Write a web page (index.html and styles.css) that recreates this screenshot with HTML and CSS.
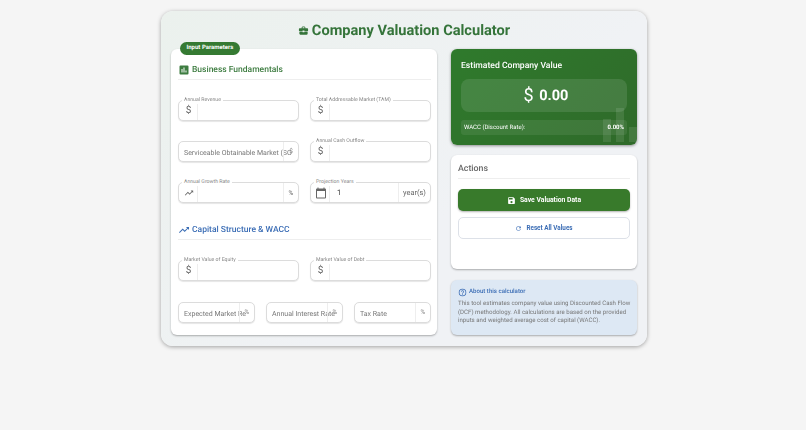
FILE: index.html
```html
<!DOCTYPE html>
<html lang="en">
<head>
  <meta charset="UTF-8" />
  <meta name="viewport" content="width=device-width, initial-scale=1.0"/>
  <title>Company Valuation Calculator</title>
  <link rel="stylesheet" href="styles.css">
</head>
<body>
  <div class="shell">
    <h1 class="title">
      <svg class="title-icon" viewBox="0 0 24 24"><path d="M10 16v-1H3.01L3 19c0 1.11.89 2 2 2h14c1.11 0 2-.89 2-2v-4h-7v1h-4zm10-9h-4.01V5l-2-2h-4l-2 2v2H4c-1.1 0-2 .9-2 2v3c0 1.11.89 2 2 2h6v-2h4v2h6c1.1 0 2-.9 2-2V9c0-1.1-.9-2-2-2zm-6 0h-4V5h4v2z"/></svg>
      Company Valuation Calculator
    </h1>
    <div class="columns">
      <div class="card inputs">
        <span class="badge">Input Parameters</span>

        <h2 class="section green">
          <svg viewBox="0 0 24 24"><path d="M19 3H5a2 2 0 0 0-2 2v14a2 2 0 0 0 2 2h14a2 2 0 0 0 2-2V5a2 2 0 0 0-2-2zM9 17H7v-7h2zm4 0h-2V7h2zm4 0h-2v-4h2z"/></svg>
          Business Fundamentals
        </h2>
        <div class="grid two">
          <div class="field"><label>Annual Revenue</label><span class="adorn start">$</span><span class="value"></span></div>
          <div class="field"><label>Total Addressable Market (TAM)</label><span class="adorn start">$</span><span class="value"></span></div>
          <div class="field empty"><span class="placeholder">Serviceable Obtainable Market (SO</span><span class="adorn end over">$</span></div>
          <div class="field"><label>Annual Cash Outflow</label><span class="adorn start">$</span><span class="value"></span></div>
          <div class="field"><label>Annual Growth Rate</label>
            <span class="adorn start"><svg class="adorn-icon" viewBox="0 0 24 24"><path d="M16 6l2.3 2.3-4.9 4.9-4-4L2 16.6 3.4 18l6-6 4 4 6.3-6.3L22 12V6z"/></svg></span>
            <span class="value"></span><span class="adorn end">%</span></div>
          <div class="field"><label>Projection Years</label>
            <span class="adorn start"><svg class="adorn-icon cal" viewBox="0 0 24 24"><path d="M20 3h-1V1h-2v2H7V1H5v2H4a2 2 0 0 0-2 2v16a2 2 0 0 0 2 2h16a2 2 0 0 0 2-2V5a2 2 0 0 0-2-2zm0 18H4V8h16z"/></svg></span>
            <span class="value">1</span><span class="adorn end years">year(s)</span></div>
        </div>

        <h2 class="section blue second">
          <svg viewBox="0 0 24 24"><path d="M16 6l2.3 2.3-4.9 4.9-4-4L2 16.6 3.4 18l6-6 4 4 6.3-6.3L22 12V6z"/></svg>
          Capital Structure &amp; WACC
        </h2>
        <div class="grid two">
          <div class="field"><label>Market Value of Equity</label><span class="adorn start">$</span><span class="value"></span></div>
          <div class="field"><label>Market Value of Debt</label><span class="adorn start">$</span><span class="value"></span></div>
        </div>
        <div class="grid three">
          <div class="field empty"><span class="placeholder">Expected Market Re</span><span class="adorn end over">%</span></div>
          <div class="field empty"><span class="placeholder">Annual Interest Rate</span><span class="adorn end over">%</span></div>
          <div class="field empty"><span class="placeholder">Tax Rate</span><span class="adorn end over">%</span></div>
        </div>
      </div>

      <div class="side">
        <div class="result">
          <h3>Estimated Company Value</h3>
          <div class="amount"><span class="currency">$</span> 0.00</div>
          <div class="wacc"><span>WACC (Discount Rate):</span><b>0.00%</b></div>
          <div class="bars"><i class="b1"></i><i class="b2"></i><i class="b3"></i></div>
        </div>

        <div class="card actions">
          <h3>Actions</h3>
          <button class="btn primary">
            <svg viewBox="0 0 24 24"><path d="M17 3H5a2 2 0 0 0-2 2v14a2 2 0 0 0 2 2h14a2 2 0 0 0 2-2V7zm-5 16a3 3 0 1 1 0-6 3 3 0 0 1 0 6zm3-10H5V5h10z"/></svg>
            Save Valuation Data
          </button>
          <button class="btn outline">
            <svg viewBox="0 0 24 24"><path d="M17.65 6.35A7.96 7.96 0 0 0 12 4a8 8 0 1 0 7.73 10h-2.08A6 6 0 1 1 12 6c1.66 0 3.14.69 4.22 1.78L13 11h7V4z"/></svg>
            Reset All Values
          </button>
        </div>

        <div class="about">
          <div class="about-head">
            <svg viewBox="0 0 24 24"><path d="M11 18h2v-2h-2zm1-16a10 10 0 1 0 0 20 10 10 0 0 0 0-20zm0 18a8 8 0 1 1 0-16 8 8 0 0 1 0 16zm0-14a4 4 0 0 0-4 4h2a2 2 0 1 1 4 0c0 2-3 1.75-3 5h2c0-2.25 3-2.5 3-5a4 4 0 0 0-4-4z"/></svg>
            About this calculator
          </div>
          <p>This tool estimates company value using Discounted Cash Flow (DCF) methodology. All calculations are based on the provided inputs and weighted average cost of capital (WACC).</p>
        </div>
      </div>
    </div>
  </div>
</body>
</html>
```

FILE: styles.css
```css
* {
  box-sizing: border-box;
}
body {
  margin: 0;
  height: 430px;
  overflow: hidden;
  background: #f5f5f5;
  font-family: Roboto, "Liberation Sans", sans-serif;
  text-rendering: geometricPrecision;
  color: #333;
  padding: 11px 159px 0 161px;
}
.shell {
  height: 335px;
  padding: 0 10px;
  border-radius: 12px;
  background: linear-gradient(135deg, #ebf1ed, #f0f2f5 60%);
  box-shadow: 0 1px 4px rgba(0, 0, 0, 0.35);
  filter: blur(0.3px);
}
.title {
  margin: 0;
  height: 38px;
  display: flex;
  align-items: center;
  justify-content: center;
  gap: 3px;
  font-size: 14.6px;
  font-weight: 700;
  color: #35743a;
}
.title-icon {
  width: 11px;
  height: 11px;
  fill: #35743a;
}
.columns {
  display: flex;
  gap: 14px;
}
.card {
  background: #fff;
  border-radius: 6px;
  box-shadow: 0 1px 2px rgba(0, 0, 0, 0.3);
}
.inputs {
  position: relative;
  width: 266px;
  height: 286px;
  padding: 14px 6px 0 7px;
}
.badge {
  position: absolute;
  top: -7px;
  left: 8.5px;
  height: 12.5px;
  line-height: 12.5px;
  padding: 0 7px;
  border-radius: 7px;
  background: #357a32;
  color: #fff;
  font-size: 6px;
  font-weight: 700;
}
.section {
  margin: 0 0 20px;
  height: 17px;
  padding: 0 0 2px;
  display: flex;
  align-items: center;
  gap: 2px;
  font-size: 8.5px;
  font-weight: 500;
  border-bottom: 1px solid #eee;
}
.section svg {
  width: 12px;
  height: 12px;
}
.section.green {
  color: #3d7c40;
}
.section.green svg {
  fill: #3d7c40;
}
.section.blue {
  color: #3b6db5;
}
.section.blue svg {
  fill: #3b6db5;
}
.section.second {
  margin-top: 20px;
}
.grid {
  display: grid;
  gap: 20px 11px;
}
.grid.two {
  grid-template-columns: 1fr 1fr;
}
.grid.three {
  grid-template-columns: 1fr 1fr 1fr;
  margin-top: 21px;
}
.field {
  position: relative;
  height: 21px;
  display: flex;
  align-items: center;
  border: 1px solid #dcdcdc;
  border-radius: 5px;
  box-shadow: 0 1px 1px rgba(0, 0, 0, 0.1);
  background: #fff;
  min-width: 0;
}
.field label {
  position: absolute;
  top: -4px;
  left: 3px;
  padding: 0 2px;
  background: #fff;
  font-size: 5.2px;
  line-height: 7px;
  color: #888;
  white-space: nowrap;
}
.adorn {
  height: 100%;
  display: flex;
  align-items: center;
  justify-content: center;
  color: #666;
  font-size: 10px;
  flex: none;
}
.adorn.start {
  width: 19px;
  border-right: 1px solid #eee;
  padding-left: 1px;
}
.adorn.end {
  width: 15px;
  font-size: 6.5px;
  border-left: 1px solid #eee;
  margin-left: auto;
}
.adorn.over {
  position: absolute;
  right: 0;
  top: 0;
  color: #888;
  padding-bottom: 2px;
}
.adorn.years {
  width: 32px;
  font-size: 7.4px;
}
.adorn-icon {
  width: 10px;
  height: 10px;
  fill: #666;
}
.adorn-icon.cal {
  width: 12px;
  height: 12px;
}
.value {
  padding-left: 7px;
  font-size: 7.7px;
  color: #444;
}
.placeholder {
  padding-left: 5px;
  padding-top: 3px;
  font-size: 7px;
  color: #777;
  white-space: nowrap;
}
.side {
  width: 186px;
  display: flex;
  flex-direction: column;
  gap: 10px;
}
.result {
  position: relative;
  height: 96px;
  padding: 11px 10px 0;
  border-radius: 6px;
  overflow: hidden;
  background: linear-gradient(135deg, #2f7a2c, #2f6a2a);
  color: #fff;
  box-shadow: 0 1px 3px rgba(0, 0, 0, 0.4);
}
.result h3 {
  margin: 0;
  font-size: 8.6px;
  font-weight: 500;
  line-height: 13px;
}
.amount {
  margin-top: 6px;
  height: 33px;
  padding-left: 4px;
  line-height: 33px;
  border-radius: 8px;
  background: rgba(255, 255, 255, 0.11);
  text-align: center;
  font-size: 14.5px;
  font-weight: 700;
}
.currency {
  font-size: 18px;
  font-weight: 400;
  vertical-align: -1px;
  margin-right: 2px;
}
.wacc {
  margin-top: 8px;
  height: 15px;
  padding: 0 3px;
  border-radius: 3px;
  background: rgba(255, 255, 255, 0.08);
  display: flex;
  align-items: center;
  justify-content: space-between;
  font-size: 6px;
}
.bars {
  position: absolute;
  right: 0;
  bottom: 3px;
  display: flex;
  align-items: flex-end;
  gap: 4.5px;
}
.bars i {
  display: block;
  width: 8.5px;
  background: rgba(255, 255, 255, 0.1);
}
.bars .b1 {
  height: 23px;
}
.bars .b2 {
  height: 34px;
}
.bars .b3 {
  height: 15px;
}
.actions {
  height: 114px;
  padding: 7px 7px 0;
}
.actions h3 {
  margin: 0 0 10px;
  height: 17px;
  font-size: 8.8px;
  line-height: 14px;
  font-weight: 500;
  color: #666;
  border-bottom: 1px solid #eee;
}
.btn {
  width: 100%;
  height: 22px;
  display: flex;
  align-items: center;
  justify-content: center;
  gap: 4px;
  border-radius: 5px;
  font-family: inherit;
  font-size: 6.8px;
  font-weight: 700;
}
.btn svg {
  width: 9px;
  height: 9px;
}
.btn.primary {
  border: none;
  background: #387a2b;
  color: #fff;
  box-shadow: 0 1px 2px rgba(0, 0, 0, 0.3);
}
.btn.primary svg {
  fill: #fff;
}
.btn.outline {
  margin-top: 6px;
  padding-bottom: 2px;
  border: 1px solid #dde1e8;
  background: #fff;
  color: #3b6db5;
  font-size: 6.3px;
}
.btn.outline svg {
  width: 7px;
  height: 7px;
  margin-top: 2px;
  fill: #3b6db5;
}
.about {
  height: 55px;
  margin-top: 1px;
  padding: 7px 5px 6px 7px;
  border-radius: 6px;
  background: #dde8f4;
  box-shadow: 0 1px 2px rgba(0, 0, 0, 0.3);
}
.about-head {
  display: flex;
  align-items: center;
  gap: 2px;
  font-size: 6.1px;
  font-weight: 500;
  color: #3b6db5;
  line-height: 10px;
}
.about-head svg {
  width: 9px;
  height: 9px;
  fill: #3b6db5;
}
.about p {
  margin: 3px 0 0;
  font-size: 6.1px;
  line-height: 8.6px;
  color: #777;
}
```
